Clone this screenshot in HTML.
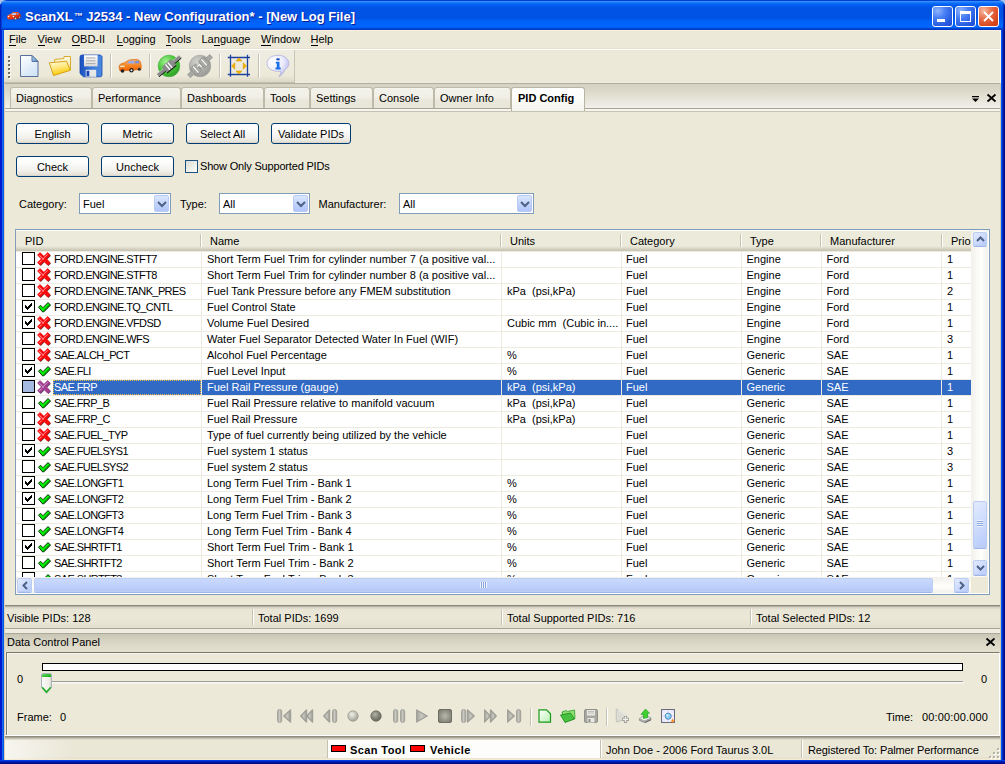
<!DOCTYPE html>
<html><head><meta charset="utf-8">
<style>
*{margin:0;padding:0;box-sizing:border-box}
html,body{width:1005px;height:764px;overflow:hidden;background:#a8c2ea}
body{position:relative;font-family:"Liberation Sans",sans-serif;font-size:11px;color:#000}
.a{position:absolute}
.t{position:absolute;white-space:nowrap;line-height:16px;height:16px}
#win{position:absolute;left:0;top:0;width:1005px;height:764px;border-radius:7px 7px 0 0;overflow:hidden;
 background:linear-gradient(to right,#0019cf 0,#0019cf 2px,#166aee 2px,#166aee 3px,#0055e5 3px,#0055e5 4px,transparent 4px,transparent 1001px,#0050f4 1001px,#0050f4 1002px,#0030d0 1002px,#0030d0 1003px,#001a9c 1003px,#001a9c 1004px,#000e88 1004px)}
#title{position:absolute;left:0;top:0;width:1005px;height:30px;
 background:linear-gradient(to bottom,#0041d0 0,#0041d0 1px,#3d95ff 1px,#2a86ff 2px,#0c6ff8 3px,#005ef0 5px,#0053e4 8px,#0052e2 18px,#0062f8 21px,#0066ff 27px,#0056ea 28px,#0038c4 29px,#0038c4 30px)}
#client{position:absolute;left:4px;top:30px;width:997px;height:730px;background:#ece9d8;overflow:hidden}
#bottomb{position:absolute;left:0;top:760px;width:1005px;height:4px;background:linear-gradient(to bottom,#0040e8 0,#0040e8 1px,#0020b8 1px,#0020b8 2px,#0012a0 2px,#0012a0 3px,#000a88 3px)}
.ttl{position:absolute;left:25px;top:9px;color:#fff;font-weight:bold;font-size:13px;line-height:16px;text-shadow:1px 1px 0 #0a1e9a}
.wbtn{position:absolute;top:6px;width:21px;height:21px;border:1px solid #fff;border-radius:3px;
 background:radial-gradient(circle at 25% 20%,#8fb4fb 0,#4a80f4 35%,#2459e0 75%,#1c4ad0 100%)}
.wbtn.c{background:radial-gradient(circle at 25% 20%,#f4b8a0 0,#e86a44 40%,#d9481f 75%,#c23c18 100%)}
u{text-decoration:none;border-bottom:1px solid #000;}
.btn{position:absolute;height:21px;border:1px solid #003c74;border-radius:3px;
 background:linear-gradient(to bottom,#fff 0,#fcfcfb 30%,#f2f1ec 70%,#e6e3d8 92%,#d6d0c5 100%);text-align:center;line-height:20px}
.combo{position:absolute;height:21px;border:1px solid #7f9db9;background:#fff}
.combo .tx{position:absolute;left:3px;top:2px;line-height:16px}
.cbtn{position:absolute;right:1px;top:1px;width:15px;height:17px;border:1px solid #b9cbf3;border-radius:2px;
 background:linear-gradient(to bottom,#dbe6fd 0,#c4d5fc 50%,#b0c6fa 100%)}
.hd{position:absolute;top:0;height:21px;line-height:16px;padding-top:4px}
.sep{position:absolute;top:4px;width:2px;height:13px;border-left:1px solid #c7c5b2;border-right:1px solid #fff}
.row{position:absolute;left:0;width:956px;height:16px}
.cell{position:absolute;top:0;line-height:15px;height:16px;white-space:nowrap;overflow:hidden}
.cb{position:absolute;left:6px;top:1px;width:13px;height:13px;border:1px solid #000;background:#fff}
.tab{position:absolute;top:57px;height:21px;border:1px solid #bdbaa9;border-bottom:none;border-radius:3px 3px 0 0;
 background:linear-gradient(to bottom,#f8f7f2 0,#f3f2ea 1px,#f1efe5 10px,#eae8dc 11px,#e8e6d8 100%)}
.tab .tx{position:absolute;top:2px;line-height:16px;white-space:nowrap}
</style></head><body>
<div id="win">
<div id="title">
 <svg class="a" style="left:4px;top:8px" width="20" height="14" viewBox="4 8 20 14">
  <defs><linearGradient id="gtc" x1="0" y1="0" x2="1" y2="1"><stop offset="0" stop-color="#ff8050"/><stop offset="0.5" stop-color="#f03a10"/><stop offset="1" stop-color="#b81400"/></linearGradient></defs>
  <path d="M7 17 Q7 15.2 9 14.6 L11.5 13.5 L12.5 12.3 Q15 11.6 18 12.1 L20 13.8 Q21.2 15 20.9 16.8 L19.5 18.3 L16 19.3 L9 19.6 Q7 19.2 7 17 Z" fill="url(#gtc)"/>
  <path d="M11 14.9 L12.8 13 H16.2 L16 14.9 Z" fill="#b0c8f4"/>
  <path d="M16.9 13.1 H18.1 L18.8 14.8 H16.7 Z" fill="#8898d0"/>
  <circle cx="8.6" cy="16.5" r="0.7" fill="#fff"/><circle cx="13.4" cy="16.5" r="0.7" fill="#fff"/>
  <ellipse cx="15.4" cy="18.6" rx="1" ry="1.3" fill="#eee" stroke="#222" stroke-width="0.6"/>
  <ellipse cx="19.6" cy="17.3" rx="0.8" ry="1.1" fill="#eee" stroke="#222" stroke-width="0.6"/>
 </svg>
 <div class="a" style="left:0;top:4px;width:2px;height:26px;background:linear-gradient(to right,#0020b8 0,#0020b8 1px,#0040d8 1px)"></div>
 <div class="a" style="left:1003px;top:4px;width:2px;height:26px;background:linear-gradient(to right,#0030c0 0,#0030c0 1px,#0018a0 1px)"></div>
 <div class="ttl">ScanXL<span style="font-size:9px;position:relative;top:-2px;margin-left:1px">™</span> J2534 - New Configuration* - [New Log File]</div>
 <div class="wbtn" style="left:932px"><div class="a" style="left:4px;top:12px;width:8px;height:3px;background:#fff"></div></div>
 <div class="wbtn" style="left:955px"><div class="a" style="left:4px;top:4px;width:11px;height:11px;border:1px solid #fff;border-top-width:3px"></div></div>
 <div class="wbtn c" style="left:978px">
  <svg class="a" style="left:3px;top:3px" width="13" height="13" viewBox="0 0 13 13"><path d="M2 2 L11 11 M11 2 L2 11" stroke="#fff" stroke-width="1.9"/></svg>
 </div>
</div>
<div id="client">
<div class="t" style="left:5.0px;top:1px"><u>F</u>ile</div>
<div class="t" style="left:33.5px;top:1px"><u>V</u>iew</div>
<div class="t" style="left:67.5px;top:1px"><u>O</u>BD-II</div>
<div class="t" style="left:112.5px;top:1px"><u>L</u>ogging</div>
<div class="t" style="left:161.5px;top:1px"><u>T</u>ools</div>
<div class="t" style="left:197.5px;top:1px">La<u>n</u>guage</div>
<div class="t" style="left:257.0px;top:1px"><u>W</u>indow</div>
<div class="t" style="left:306.5px;top:1px"><u>H</u>elp</div>
<div class="a" style="left:0;top:18px;width:997px;height:1px;background:#e6e2d0"></div>
<div class="a" style="left:0;top:19px;width:997px;height:1px;background:#fff"></div>
<div class="a" style="left:0;top:20px;width:997px;height:32px;background:#ece9d8"></div>
<div class="a" style="left:0;top:52px;width:997px;height:1px;background:#eeebdd"></div>
<div class="a" style="left:0;top:20px;width:291px;height:33px;background:linear-gradient(to bottom,#efede2,#ece9d8 80%,#dcd9c8);border-right:1px solid #c8c5b4;border-bottom:1px solid #c3bfae"></div>
<div class="a" style="left:4px;top:26px;width:2px;height:2px;background:#6e6c62;box-shadow:1px 1px 0 #fff"></div>
<div class="a" style="left:4px;top:30px;width:2px;height:2px;background:#6e6c62;box-shadow:1px 1px 0 #fff"></div>
<div class="a" style="left:4px;top:34px;width:2px;height:2px;background:#6e6c62;box-shadow:1px 1px 0 #fff"></div>
<div class="a" style="left:4px;top:38px;width:2px;height:2px;background:#6e6c62;box-shadow:1px 1px 0 #fff"></div>
<div class="a" style="left:4px;top:42px;width:2px;height:2px;background:#6e6c62;box-shadow:1px 1px 0 #fff"></div>
<div class="a" style="left:4px;top:46px;width:2px;height:2px;background:#6e6c62;box-shadow:1px 1px 0 #fff"></div>
<div class="a" style="left:106px;top:24px;width:1px;height:24px;background:#c5c2b2;box-shadow:1px 0 0 #fff"></div>
<div class="a" style="left:145px;top:24px;width:1px;height:24px;background:#c5c2b2;box-shadow:1px 0 0 #fff"></div>
<div class="a" style="left:215px;top:24px;width:1px;height:24px;background:#c5c2b2;box-shadow:1px 0 0 #fff"></div>
<div class="a" style="left:254px;top:24px;width:1px;height:24px;background:#c5c2b2;box-shadow:1px 0 0 #fff"></div>
<svg class="a" style="left:13px;top:22px" width="26" height="28" viewBox="17 52 26 28"><defs><linearGradient id="gn" x1="0" y1="0" x2="0.6" y2="1"><stop offset="0" stop-color="#fff"/><stop offset="1" stop-color="#d2e4f6"/></linearGradient>
<linearGradient id="gnf" x1="0" y1="0" x2="1" y2="1"><stop offset="0" stop-color="#c8e4f8"/><stop offset="1" stop-color="#3a88d0"/></linearGradient></defs>
<path d="M20.5 55.5 H32 L38 61.5 V76.5 H20.5 Z" fill="url(#gn)" stroke="#5b6f9c" stroke-width="1"/>
<path d="M32 55.5 V61.5 H38 Z" fill="url(#gnf)" stroke="#5b6f9c" stroke-width="1" stroke-linejoin="round"/></svg>
<svg class="a" style="left:43px;top:22px" width="26" height="28" viewBox="47 52 26 28"><defs><linearGradient id="go" x1="0" y1="0" x2="0.3" y2="1"><stop offset="0" stop-color="#fffce0"/><stop offset="0.5" stop-color="#ffe880"/><stop offset="1" stop-color="#f8c800"/></linearGradient>
<linearGradient id="gob" x1="0" y1="0" x2="0" y2="1"><stop offset="0" stop-color="#fffbe0"/><stop offset="1" stop-color="#f4e090"/></linearGradient></defs>
<path d="M54.6 59.5 L63.8 58.5 L64 56.5 H70.5 V69.5 L54.6 70.5 Z" fill="url(#gob)" stroke="#d4a420" stroke-width="0.9"/>
<path d="M49.3 62.8 L66.5 61.2 L70.4 70.3 L53.5 75.6 Z" fill="url(#go)" stroke="#d09a10" stroke-width="0.9" stroke-linejoin="round"/></svg>
<svg class="a" style="left:74px;top:22px" width="26" height="28" viewBox="78 52 26 28"><defs><linearGradient id="gf" x1="0" y1="0" x2="1" y2="0"><stop offset="0" stop-color="#1a50c0"/><stop offset="0.5" stop-color="#3a78d8"/><stop offset="1" stop-color="#4a8ae0"/></linearGradient>
<linearGradient id="gfl" x1="0" y1="0" x2="0" y2="1"><stop offset="0" stop-color="#ffffff"/><stop offset="1" stop-color="#d8d8d8"/></linearGradient></defs>
<path d="M82 55 H100.5 L102 56.5 V75 Q102 76.8 100.3 76.8 H83.5 L80 73.5 V57 Q80 55 82 55 Z" fill="url(#gf)" stroke="#1848b0" stroke-width="0.8"/>
<rect x="84" y="55.2" width="13.6" height="11.2" fill="url(#gfl)"/>
<path d="M86 58 H95.5 M86 60.8 H95.5 M86 63.6 H95.5" stroke="#a8a8a8" stroke-width="1"/>
<rect x="85.7" y="69.8" width="10.5" height="7" fill="#e8e8e8"/>
<rect x="86.5" y="70.8" width="2.8" height="5.5" fill="#1a48b8"/></svg>
<svg class="a" style="left:113px;top:27px" width="26" height="17" viewBox="117 57 26 17"><defs><linearGradient id="gc" x1="0" y1="0" x2="0" y2="1"><stop offset="0" stop-color="#ffb050"/><stop offset="1" stop-color="#f06000"/></linearGradient></defs>
<path d="M119 67 L119.5 65 Q120.5 63.5 124 63 L128.5 60.2 Q131 59.3 137 59.5 Q139.5 59.8 140.5 62 L141.3 66 L141 69.5 L120 71 Z" fill="url(#gc)" stroke="#d85a00" stroke-width="0.6"/>
<path d="M126.5 63.5 L129.5 60.8 H134.5 L134.3 63.5 Z" fill="#98aaf0"/>
<path d="M135.3 60.7 H138.5 L139.8 63.3 L135.2 63.6 Z" fill="#7890e0"/>
<rect x="119.8" y="65.5" width="5" height="1.6" fill="#ffe8c0" stroke="#b88850" stroke-width="0.3"/>
<circle cx="122.5" cy="71" r="1.8" fill="#222"/><circle cx="131.5" cy="70.3" r="2.2" fill="#222"/><circle cx="131.5" cy="70.3" r="1" fill="#eee"/><circle cx="139.3" cy="69.3" r="1.5" fill="#333"/></svg>
<svg class="a" style="left:152px;top:23px" width="26" height="26" viewBox="156 53 26 26"><defs><radialGradient id="gg" cx="0.35" cy="0.3" r="0.75"><stop offset="0" stop-color="#a0f090"/><stop offset="0.55" stop-color="#48c838"/><stop offset="1" stop-color="#30a028"/></radialGradient></defs>
<circle cx="169" cy="66" r="10.8" fill="url(#gg)" stroke="#40a838" stroke-width="0.6"/>
<g transform="rotate(-40 169 66)">
<rect x="154.5" y="64.2" width="29" height="3.6" fill="#8c8c8c"/>
<path d="M154.5 67.9 H183.5" stroke="#111" stroke-width="0.9"/>
<path d="M154.5 64.3 H183.5" stroke="#d0d0d0" stroke-width="0.6"/>
<rect x="163" y="62" width="12" height="8" rx="0.8" fill="#8a8a8a"/>
<path d="M163 70.2 H175" stroke="#111" stroke-width="1"/>
<path d="M167.3 62.5 V69.5 M170.3 62.5 V69.5" stroke="#fff" stroke-width="1.3"/>
</g></svg>
<svg class="a" style="left:183px;top:23px" width="26" height="26" viewBox="187 53 26 26"><defs><radialGradient id="gy" cx="0.35" cy="0.3" r="0.75"><stop offset="0" stop-color="#d0d0cc"/><stop offset="0.55" stop-color="#b0b0ac"/><stop offset="1" stop-color="#989894"/></radialGradient></defs>
<circle cx="200" cy="66" r="10.8" fill="url(#gy)" stroke="#a0a09c" stroke-width="0.6"/>
<g transform="rotate(-42 200 66)">
<rect x="185" y="64" width="30" height="4.2" fill="#a8a8a4" stroke="#888" stroke-width="0.5"/>
<rect x="191" y="61.5" width="7" height="9" rx="1" fill="#a8a8a4" stroke="#888" stroke-width="0.6"/>
<rect x="202" y="61.5" width="7" height="9" rx="1" fill="#a8a8a4" stroke="#888" stroke-width="0.6"/>
<path d="M194.5 62 V70 M205.5 62 V70 M197.5 64.5 H200.5 V68" stroke="#fff" stroke-width="1.1" fill="none"/>
</g></svg>
<svg class="a" style="left:222px;top:23px" width="26" height="26" viewBox="226 53 26 26"><path d="M227.8 57.5 H250 M227.8 74.5 H250 M230.5 54.8 V76.8 M247.5 54.8 V76.8" stroke="#1c40a0" stroke-width="1.3"/>
<path d="M236 61 L239 57.8 L242 61 Z M236 71 L239 74.2 L242 71 Z M234.8 62.8 L231.5 66 L234.8 69.2 Z M243.2 62.8 L246.5 66 L243.2 69.2 Z" fill="#f4b400" stroke="#d09000" stroke-width="0.5" stroke-linejoin="round"/></svg>
<svg class="a" style="left:261px;top:23px" width="26" height="26" viewBox="265 53 26 26"><defs><radialGradient id="gi" cx="0.3" cy="0.3" r="0.8"><stop offset="0" stop-color="#fff"/><stop offset="0.55" stop-color="#ececfc"/><stop offset="1" stop-color="#b8b8f0"/></radialGradient></defs>
<path d="M278 55.3 C284.5 55.3 288.8 58.8 288.8 63.3 C288.8 66.5 287 68.5 284.5 70 C284 72.5 282 75 279 76.5 C280.5 74.5 281 72.5 280.5 71.3 C272 72 267 68 267 63.3 C267 58.8 271.5 55.3 278 55.3 Z" fill="url(#gi)" stroke="#a8a8d8" stroke-width="0.7"/>
<ellipse cx="278" cy="59.3" rx="1.9" ry="1.1" fill="#1848b8"/>
<path d="M275.8 61.8 H279.5 V67.6 H280.7 V69.5 H275.5 V67.6 H276.8 V63.5 H275.8 Z" fill="#1a70e8"/></svg>
<div class="a" style="left:0;top:53px;width:997px;height:25px;background:linear-gradient(to bottom,#b0aea0 0,#b0aea0 1px,#d5d2c4 1px,#d9d6c7 6px,#e5e3d7 15px,#f1f0ea 25px)"></div>
<div class="a" style="left:0;top:78px;width:997px;height:1px;background:#a8a596"></div>
<div class="a" style="left:0;top:79px;width:997px;height:2px;background:#f6f5ef"></div>
<div class="a" style="left:0;top:81px;width:997px;height:1px;background:#c5c2b2"></div>
<div class="tab" style="left:6px;width:82px"><div class="tx" style="left:5px">Diagnostics</div></div>
<div class="tab" style="left:88px;width:89px"><div class="tx" style="left:5px">Performance</div></div>
<div class="tab" style="left:177px;width:83px"><div class="tx" style="left:5px">Dashboards</div></div>
<div class="tab" style="left:260px;width:46px"><div class="tx" style="left:5px">Tools</div></div>
<div class="tab" style="left:306px;width:63px"><div class="tx" style="left:5px">Settings</div></div>
<div class="tab" style="left:369px;width:61px"><div class="tx" style="left:5px">Console</div></div>
<div class="tab" style="left:430px;width:77px"><div class="tx" style="left:5px">Owner Info</div></div>
<div class="tab" style="left:507px;top:57px;width:74px;height:24px;background:linear-gradient(to bottom,#fff 0,#fdfdfb 10px,#f4f3ec 100%);border-color:#b8b5a4"><div class="tx" style="left:6px;top:2px;font-weight:bold">PID Config</div></div>
<svg class="a" style="left:968px;top:66px" width="9" height="7" viewBox="0 0 9 7"><path d="M0 0 H7 V1.3 H0 Z M0 2.5 H7 L3.5 6 Z" fill="#000"/></svg>
<svg class="a" style="left:982px;top:63px" width="11" height="10" viewBox="0 0 11 10"><path d="M1.5 1.5 L9.5 8.5 M9.5 1.5 L1.5 8.5" stroke="#000" stroke-width="1.8"/></svg>
<div class="btn" style="left:12px;top:93px;width:73px">English</div>
<div class="btn" style="left:97px;top:93px;width:73px">Metric</div>
<div class="btn" style="left:182px;top:93px;width:73px">Select All</div>
<div class="btn" style="left:267px;top:93px;width:80px">Validate PIDs</div>
<div class="btn" style="left:12px;top:126px;width:73px">Check</div>
<div class="btn" style="left:97px;top:126px;width:73px">Uncheck</div>
<div class="a" style="left:181px;top:130px;width:13px;height:13px;border:1px solid #1c5180;background:linear-gradient(135deg,#dcdcd7 0,#f0f0ea 60%,#fff 100%)"></div>
<div class="t" style="left:196px;top:128px;letter-spacing:-0.18px">Show Only Supported PIDs</div>
<div class="t" style="left:15px;top:166px">Category:</div>
<div class="combo" style="left:75px;top:163px;width:92px"><div class="tx">Fuel</div><div class="cbtn"><svg class="a" style="left:2px;top:5px" width="10" height="7" viewBox="0 0 10 7"><path d="M1 1 L5 5 L9 1" fill="none" stroke="#4d6185" stroke-width="2"/></svg></div></div>
<div class="t" style="left:176px;top:166px">Type:</div>
<div class="combo" style="left:215px;top:163px;width:91px"><div class="tx">All</div><div class="cbtn"><svg class="a" style="left:2px;top:5px" width="10" height="7" viewBox="0 0 10 7"><path d="M1 1 L5 5 L9 1" fill="none" stroke="#4d6185" stroke-width="2"/></svg></div></div>
<div class="t" style="left:314.5px;top:166px">Manufacturer:</div>
<div class="combo" style="left:395px;top:163px;width:135px"><div class="tx">All</div><div class="cbtn"><svg class="a" style="left:2px;top:5px" width="10" height="7" viewBox="0 0 10 7"><path d="M1 1 L5 5 L9 1" fill="none" stroke="#4d6185" stroke-width="2"/></svg></div></div>
<div class="a" style="left:11px;top:199px;width:975px;height:366px;border:1px solid #7f9db9;background:#fff;overflow:hidden">
<div class="a" style="left:0;top:1px;width:955px;height:20px;background:linear-gradient(to bottom,#ebeadb 0,#ebeadb 15px,#e5e2d2 16px,#dedacb 17px,#d6d2c2 18px,#cbc7b7 19px,#cbc7b7 20px)"></div>
<div class="t" style="left:9px;top:3px">PID</div>
<div class="t" style="left:194px;top:3px">Name</div>
<div class="a" style="left:184px;top:4px;width:1px;height:13px;background:#c7c5b2;box-shadow:1px 0 0 #fff"></div>
<div class="t" style="left:494px;top:3px">Units</div>
<div class="a" style="left:484px;top:4px;width:1px;height:13px;background:#c7c5b2;box-shadow:1px 0 0 #fff"></div>
<div class="t" style="left:614px;top:3px">Category</div>
<div class="a" style="left:604px;top:4px;width:1px;height:13px;background:#c7c5b2;box-shadow:1px 0 0 #fff"></div>
<div class="t" style="left:734px;top:3px">Type</div>
<div class="a" style="left:724px;top:4px;width:1px;height:13px;background:#c7c5b2;box-shadow:1px 0 0 #fff"></div>
<div class="t" style="left:814px;top:3px">Manufacturer</div>
<div class="a" style="left:804px;top:4px;width:1px;height:13px;background:#c7c5b2;box-shadow:1px 0 0 #fff"></div>
<div class="t" style="left:935px;top:3px">Prior</div>
<div class="a" style="left:925px;top:4px;width:1px;height:13px;background:#c7c5b2;box-shadow:1px 0 0 #fff"></div>
<div class="a" style="left:0;top:21px;width:955px;height:1px;background:#edebe0"></div>
<div class="a" style="left:6px;top:22px;width:13px;height:13px;border:1px solid #000;background:#fff"></div>
<svg class="a" style="left:20.5px;top:21.5px" width="15" height="15" viewBox="0 0 15 15"><path d="M0.5 3 L3 0.5 L6.8 4.3 L10.6 0.5 L13.1 3 L9.3 6.8 L13.1 10.6 L10.6 13.1 L6.8 9.3 L3 13.1 L0.5 10.6 L4.3 6.8 Z" transform="translate(0.8 0.8)" fill="#600000" opacity="0.85"/><path d="M0.5 3 L3 0.5 L6.8 4.3 L10.6 0.5 L13.1 3 L9.3 6.8 L13.1 10.6 L10.6 13.1 L6.8 9.3 L3 13.1 L0.5 10.6 L4.3 6.8 Z" fill="#ff0a0a" stroke="#ff0a0a" stroke-width="0.6"/><path d="M2.2 3 L6.8 7.6 M10.6 2.2 L5.2 7.6 M2.4 10.8 L4.6 8.6" fill="none" stroke="#ffc8d8" stroke-width="0.9" opacity="0.85"/></svg>
<div class="cell" style="left:38px;top:22px;width:146px;color:#000;letter-spacing:-0.6px;">FORD.ENGINE.STFT7</div>
<div class="cell" style="left:191px;top:22px;width:292px;color:#000;">Short Term Fuel Trim for cylinder number 7 (a positive val...</div>
<div class="cell" style="left:491px;top:22px;width:113px;color:#000;"></div>
<div class="cell" style="left:610px;top:22px;width:113px;color:#000;">Fuel</div>
<div class="cell" style="left:730.5px;top:22px;width:73px;color:#000;">Engine</div>
<div class="cell" style="left:810.5px;top:22px;width:113px;color:#000;">Ford</div>
<div class="cell" style="left:931px;top:22px;width:23px;color:#000;">1</div>
<div class="a" style="left:0;top:37px;width:955px;height:1px;background:#edebe0"></div>
<div class="a" style="left:6px;top:38px;width:13px;height:13px;border:1px solid #000;background:#fff"></div>
<svg class="a" style="left:20.5px;top:37.5px" width="15" height="15" viewBox="0 0 15 15"><path d="M0.5 3 L3 0.5 L6.8 4.3 L10.6 0.5 L13.1 3 L9.3 6.8 L13.1 10.6 L10.6 13.1 L6.8 9.3 L3 13.1 L0.5 10.6 L4.3 6.8 Z" transform="translate(0.8 0.8)" fill="#600000" opacity="0.85"/><path d="M0.5 3 L3 0.5 L6.8 4.3 L10.6 0.5 L13.1 3 L9.3 6.8 L13.1 10.6 L10.6 13.1 L6.8 9.3 L3 13.1 L0.5 10.6 L4.3 6.8 Z" fill="#ff0a0a" stroke="#ff0a0a" stroke-width="0.6"/><path d="M2.2 3 L6.8 7.6 M10.6 2.2 L5.2 7.6 M2.4 10.8 L4.6 8.6" fill="none" stroke="#ffc8d8" stroke-width="0.9" opacity="0.85"/></svg>
<div class="cell" style="left:38px;top:38px;width:146px;color:#000;letter-spacing:-0.6px;">FORD.ENGINE.STFT8</div>
<div class="cell" style="left:191px;top:38px;width:292px;color:#000;">Short Term Fuel Trim for cylinder number 8 (a positive val...</div>
<div class="cell" style="left:491px;top:38px;width:113px;color:#000;"></div>
<div class="cell" style="left:610px;top:38px;width:113px;color:#000;">Fuel</div>
<div class="cell" style="left:730.5px;top:38px;width:73px;color:#000;">Engine</div>
<div class="cell" style="left:810.5px;top:38px;width:113px;color:#000;">Ford</div>
<div class="cell" style="left:931px;top:38px;width:23px;color:#000;">1</div>
<div class="a" style="left:0;top:53px;width:955px;height:1px;background:#edebe0"></div>
<div class="a" style="left:6px;top:54px;width:13px;height:13px;border:1px solid #000;background:#fff"></div>
<svg class="a" style="left:20.5px;top:53.5px" width="15" height="15" viewBox="0 0 15 15"><path d="M0.5 3 L3 0.5 L6.8 4.3 L10.6 0.5 L13.1 3 L9.3 6.8 L13.1 10.6 L10.6 13.1 L6.8 9.3 L3 13.1 L0.5 10.6 L4.3 6.8 Z" transform="translate(0.8 0.8)" fill="#600000" opacity="0.85"/><path d="M0.5 3 L3 0.5 L6.8 4.3 L10.6 0.5 L13.1 3 L9.3 6.8 L13.1 10.6 L10.6 13.1 L6.8 9.3 L3 13.1 L0.5 10.6 L4.3 6.8 Z" fill="#ff0a0a" stroke="#ff0a0a" stroke-width="0.6"/><path d="M2.2 3 L6.8 7.6 M10.6 2.2 L5.2 7.6 M2.4 10.8 L4.6 8.6" fill="none" stroke="#ffc8d8" stroke-width="0.9" opacity="0.85"/></svg>
<div class="cell" style="left:38px;top:54px;width:146px;color:#000;letter-spacing:-0.6px;">FORD.ENGINE.TANK_PRES</div>
<div class="cell" style="left:191px;top:54px;width:292px;color:#000;">Fuel Tank Pressure before any FMEM substitution</div>
<div class="cell" style="left:491px;top:54px;width:113px;color:#000;">kPa&nbsp; (psi,kPa)</div>
<div class="cell" style="left:610px;top:54px;width:113px;color:#000;">Fuel</div>
<div class="cell" style="left:730.5px;top:54px;width:73px;color:#000;">Engine</div>
<div class="cell" style="left:810.5px;top:54px;width:113px;color:#000;">Ford</div>
<div class="cell" style="left:931px;top:54px;width:23px;color:#000;">2</div>
<div class="a" style="left:0;top:69px;width:955px;height:1px;background:#edebe0"></div>
<div class="a" style="left:6px;top:70px;width:13px;height:13px;border:1px solid #000;background:#fff"><svg class="a" style="left:0;top:0" width="11" height="11" viewBox="0 0 11 11" shape-rendering="crispEdges"><path d="M8 2h1v1h-1z M7 3h2v1h-2z M2 4h1v1h-1z M6 4h3v1h-3z M2 5h2v1h-2z M5 5h3v1h-3z M2 6h5v1h-5z M3 7h3v1h-3z M4 8h1v1h-1z" fill="#000"/></svg></div>
<svg class="a" style="left:21px;top:71px" width="15" height="12" viewBox="0 0 15 12"><path d="M1.5 6.2 L3.5 4.2 L6 6.7 L11 1.5 L13.6 4.1 L6.8 10.9 L5.6 10.9 Z" fill="#00f000" stroke="#000" stroke-width="0.8" stroke-linejoin="round"/><path d="M6.8 9.8 L12.8 3.8" stroke="#0a7a0a" stroke-width="1.1"/></svg>
<div class="cell" style="left:38px;top:70px;width:146px;color:#000;letter-spacing:-0.6px;">FORD.ENGINE.TQ_CNTL</div>
<div class="cell" style="left:191px;top:70px;width:292px;color:#000;">Fuel Control State</div>
<div class="cell" style="left:491px;top:70px;width:113px;color:#000;"></div>
<div class="cell" style="left:610px;top:70px;width:113px;color:#000;">Fuel</div>
<div class="cell" style="left:730.5px;top:70px;width:73px;color:#000;">Engine</div>
<div class="cell" style="left:810.5px;top:70px;width:113px;color:#000;">Ford</div>
<div class="cell" style="left:931px;top:70px;width:23px;color:#000;">1</div>
<div class="a" style="left:0;top:85px;width:955px;height:1px;background:#edebe0"></div>
<div class="a" style="left:6px;top:86px;width:13px;height:13px;border:1px solid #000;background:#fff"><svg class="a" style="left:0;top:0" width="11" height="11" viewBox="0 0 11 11" shape-rendering="crispEdges"><path d="M8 2h1v1h-1z M7 3h2v1h-2z M2 4h1v1h-1z M6 4h3v1h-3z M2 5h2v1h-2z M5 5h3v1h-3z M2 6h5v1h-5z M3 7h3v1h-3z M4 8h1v1h-1z" fill="#000"/></svg></div>
<svg class="a" style="left:20.5px;top:85.5px" width="15" height="15" viewBox="0 0 15 15"><path d="M0.5 3 L3 0.5 L6.8 4.3 L10.6 0.5 L13.1 3 L9.3 6.8 L13.1 10.6 L10.6 13.1 L6.8 9.3 L3 13.1 L0.5 10.6 L4.3 6.8 Z" transform="translate(0.8 0.8)" fill="#600000" opacity="0.85"/><path d="M0.5 3 L3 0.5 L6.8 4.3 L10.6 0.5 L13.1 3 L9.3 6.8 L13.1 10.6 L10.6 13.1 L6.8 9.3 L3 13.1 L0.5 10.6 L4.3 6.8 Z" fill="#ff0a0a" stroke="#ff0a0a" stroke-width="0.6"/><path d="M2.2 3 L6.8 7.6 M10.6 2.2 L5.2 7.6 M2.4 10.8 L4.6 8.6" fill="none" stroke="#ffc8d8" stroke-width="0.9" opacity="0.85"/></svg>
<div class="cell" style="left:38px;top:86px;width:146px;color:#000;letter-spacing:-0.6px;">FORD.ENGINE.VFDSD</div>
<div class="cell" style="left:191px;top:86px;width:292px;color:#000;">Volume Fuel Desired</div>
<div class="cell" style="left:491px;top:86px;width:113px;color:#000;">Cubic mm&nbsp; (Cubic in....</div>
<div class="cell" style="left:610px;top:86px;width:113px;color:#000;">Fuel</div>
<div class="cell" style="left:730.5px;top:86px;width:73px;color:#000;">Engine</div>
<div class="cell" style="left:810.5px;top:86px;width:113px;color:#000;">Ford</div>
<div class="cell" style="left:931px;top:86px;width:23px;color:#000;">1</div>
<div class="a" style="left:0;top:101px;width:955px;height:1px;background:#edebe0"></div>
<div class="a" style="left:6px;top:102px;width:13px;height:13px;border:1px solid #000;background:#fff"></div>
<svg class="a" style="left:20.5px;top:101.5px" width="15" height="15" viewBox="0 0 15 15"><path d="M0.5 3 L3 0.5 L6.8 4.3 L10.6 0.5 L13.1 3 L9.3 6.8 L13.1 10.6 L10.6 13.1 L6.8 9.3 L3 13.1 L0.5 10.6 L4.3 6.8 Z" transform="translate(0.8 0.8)" fill="#600000" opacity="0.85"/><path d="M0.5 3 L3 0.5 L6.8 4.3 L10.6 0.5 L13.1 3 L9.3 6.8 L13.1 10.6 L10.6 13.1 L6.8 9.3 L3 13.1 L0.5 10.6 L4.3 6.8 Z" fill="#ff0a0a" stroke="#ff0a0a" stroke-width="0.6"/><path d="M2.2 3 L6.8 7.6 M10.6 2.2 L5.2 7.6 M2.4 10.8 L4.6 8.6" fill="none" stroke="#ffc8d8" stroke-width="0.9" opacity="0.85"/></svg>
<div class="cell" style="left:38px;top:102px;width:146px;color:#000;letter-spacing:-0.6px;">FORD.ENGINE.WFS</div>
<div class="cell" style="left:191px;top:102px;width:292px;color:#000;">Water Fuel Separator Detected Water In Fuel (WIF)</div>
<div class="cell" style="left:491px;top:102px;width:113px;color:#000;"></div>
<div class="cell" style="left:610px;top:102px;width:113px;color:#000;">Fuel</div>
<div class="cell" style="left:730.5px;top:102px;width:73px;color:#000;">Engine</div>
<div class="cell" style="left:810.5px;top:102px;width:113px;color:#000;">Ford</div>
<div class="cell" style="left:931px;top:102px;width:23px;color:#000;">3</div>
<div class="a" style="left:0;top:117px;width:955px;height:1px;background:#edebe0"></div>
<div class="a" style="left:6px;top:118px;width:13px;height:13px;border:1px solid #000;background:#fff"></div>
<svg class="a" style="left:20.5px;top:117.5px" width="15" height="15" viewBox="0 0 15 15"><path d="M0.5 3 L3 0.5 L6.8 4.3 L10.6 0.5 L13.1 3 L9.3 6.8 L13.1 10.6 L10.6 13.1 L6.8 9.3 L3 13.1 L0.5 10.6 L4.3 6.8 Z" transform="translate(0.8 0.8)" fill="#600000" opacity="0.85"/><path d="M0.5 3 L3 0.5 L6.8 4.3 L10.6 0.5 L13.1 3 L9.3 6.8 L13.1 10.6 L10.6 13.1 L6.8 9.3 L3 13.1 L0.5 10.6 L4.3 6.8 Z" fill="#ff0a0a" stroke="#ff0a0a" stroke-width="0.6"/><path d="M2.2 3 L6.8 7.6 M10.6 2.2 L5.2 7.6 M2.4 10.8 L4.6 8.6" fill="none" stroke="#ffc8d8" stroke-width="0.9" opacity="0.85"/></svg>
<div class="cell" style="left:38px;top:118px;width:146px;color:#000;letter-spacing:-0.6px;">SAE.ALCH_PCT</div>
<div class="cell" style="left:191px;top:118px;width:292px;color:#000;">Alcohol Fuel Percentage</div>
<div class="cell" style="left:491px;top:118px;width:113px;color:#000;">%</div>
<div class="cell" style="left:610px;top:118px;width:113px;color:#000;">Fuel</div>
<div class="cell" style="left:730.5px;top:118px;width:73px;color:#000;">Generic</div>
<div class="cell" style="left:810.5px;top:118px;width:113px;color:#000;">SAE</div>
<div class="cell" style="left:931px;top:118px;width:23px;color:#000;">1</div>
<div class="a" style="left:0;top:133px;width:955px;height:1px;background:#edebe0"></div>
<div class="a" style="left:6px;top:134px;width:13px;height:13px;border:1px solid #000;background:#fff"><svg class="a" style="left:0;top:0" width="11" height="11" viewBox="0 0 11 11" shape-rendering="crispEdges"><path d="M8 2h1v1h-1z M7 3h2v1h-2z M2 4h1v1h-1z M6 4h3v1h-3z M2 5h2v1h-2z M5 5h3v1h-3z M2 6h5v1h-5z M3 7h3v1h-3z M4 8h1v1h-1z" fill="#000"/></svg></div>
<svg class="a" style="left:21px;top:135px" width="15" height="12" viewBox="0 0 15 12"><path d="M1.5 6.2 L3.5 4.2 L6 6.7 L11 1.5 L13.6 4.1 L6.8 10.9 L5.6 10.9 Z" fill="#00f000" stroke="#000" stroke-width="0.8" stroke-linejoin="round"/><path d="M6.8 9.8 L12.8 3.8" stroke="#0a7a0a" stroke-width="1.1"/></svg>
<div class="cell" style="left:38px;top:134px;width:146px;color:#000;letter-spacing:-0.6px;">SAE.FLI</div>
<div class="cell" style="left:191px;top:134px;width:292px;color:#000;">Fuel Level Input</div>
<div class="cell" style="left:491px;top:134px;width:113px;color:#000;">%</div>
<div class="cell" style="left:610px;top:134px;width:113px;color:#000;">Fuel</div>
<div class="cell" style="left:730.5px;top:134px;width:73px;color:#000;">Generic</div>
<div class="cell" style="left:810.5px;top:134px;width:113px;color:#000;">SAE</div>
<div class="cell" style="left:931px;top:134px;width:23px;color:#000;">1</div>
<div class="a" style="left:0;top:149px;width:955px;height:1px;background:#edebe0"></div>
<div class="a" style="left:37px;top:150px;width:918px;height:15px;background:#316ac5"></div>
<div class="a" style="left:37px;top:150px;width:148px;height:15px;border:1px dotted #f0c040"></div>
<div class="a" style="left:6px;top:150px;width:13px;height:13px;border:1px solid #000;background:#a6b9e0"></div>
<svg class="a" style="left:20.5px;top:149.5px" width="15" height="15" viewBox="0 0 15 15"><path d="M0.5 3 L3 0.5 L6.8 4.3 L10.6 0.5 L13.1 3 L9.3 6.8 L13.1 10.6 L10.6 13.1 L6.8 9.3 L3 13.1 L0.5 10.6 L4.3 6.8 Z" transform="translate(0.8 0.8)" fill="#40205a" opacity="0.85"/><path d="M0.5 3 L3 0.5 L6.8 4.3 L10.6 0.5 L13.1 3 L9.3 6.8 L13.1 10.6 L10.6 13.1 L6.8 9.3 L3 13.1 L0.5 10.6 L4.3 6.8 Z" fill="#a4408e" stroke="#a4408e" stroke-width="0.6"/><path d="M2.2 3 L6.8 7.6 M10.6 2.2 L5.2 7.6 M2.4 10.8 L4.6 8.6" fill="none" stroke="#d8b8e8" stroke-width="0.9" opacity="0.85"/></svg>
<div class="cell" style="left:38px;top:150px;width:146px;color:#fff;letter-spacing:-0.6px;">SAE.FRP</div>
<div class="cell" style="left:191px;top:150px;width:292px;color:#fff;">Fuel Rail Pressure (gauge)</div>
<div class="cell" style="left:491px;top:150px;width:113px;color:#fff;">kPa&nbsp; (psi,kPa)</div>
<div class="cell" style="left:610px;top:150px;width:113px;color:#fff;">Fuel</div>
<div class="cell" style="left:730.5px;top:150px;width:73px;color:#fff;">Generic</div>
<div class="cell" style="left:810.5px;top:150px;width:113px;color:#fff;">SAE</div>
<div class="cell" style="left:931px;top:150px;width:23px;color:#fff;">1</div>
<div class="a" style="left:0;top:165px;width:955px;height:1px;background:#edebe0"></div>
<div class="a" style="left:6px;top:166px;width:13px;height:13px;border:1px solid #000;background:#fff"></div>
<svg class="a" style="left:21px;top:167px" width="15" height="12" viewBox="0 0 15 12"><path d="M1.5 6.2 L3.5 4.2 L6 6.7 L11 1.5 L13.6 4.1 L6.8 10.9 L5.6 10.9 Z" fill="#00f000" stroke="#000" stroke-width="0.8" stroke-linejoin="round"/><path d="M6.8 9.8 L12.8 3.8" stroke="#0a7a0a" stroke-width="1.1"/></svg>
<div class="cell" style="left:38px;top:166px;width:146px;color:#000;letter-spacing:-0.6px;">SAE.FRP_B</div>
<div class="cell" style="left:191px;top:166px;width:292px;color:#000;">Fuel Rail Pressure relative to manifold vacuum</div>
<div class="cell" style="left:491px;top:166px;width:113px;color:#000;">kPa&nbsp; (psi,kPa)</div>
<div class="cell" style="left:610px;top:166px;width:113px;color:#000;">Fuel</div>
<div class="cell" style="left:730.5px;top:166px;width:73px;color:#000;">Generic</div>
<div class="cell" style="left:810.5px;top:166px;width:113px;color:#000;">SAE</div>
<div class="cell" style="left:931px;top:166px;width:23px;color:#000;">1</div>
<div class="a" style="left:0;top:181px;width:955px;height:1px;background:#edebe0"></div>
<div class="a" style="left:6px;top:182px;width:13px;height:13px;border:1px solid #000;background:#fff"></div>
<svg class="a" style="left:20.5px;top:181.5px" width="15" height="15" viewBox="0 0 15 15"><path d="M0.5 3 L3 0.5 L6.8 4.3 L10.6 0.5 L13.1 3 L9.3 6.8 L13.1 10.6 L10.6 13.1 L6.8 9.3 L3 13.1 L0.5 10.6 L4.3 6.8 Z" transform="translate(0.8 0.8)" fill="#600000" opacity="0.85"/><path d="M0.5 3 L3 0.5 L6.8 4.3 L10.6 0.5 L13.1 3 L9.3 6.8 L13.1 10.6 L10.6 13.1 L6.8 9.3 L3 13.1 L0.5 10.6 L4.3 6.8 Z" fill="#ff0a0a" stroke="#ff0a0a" stroke-width="0.6"/><path d="M2.2 3 L6.8 7.6 M10.6 2.2 L5.2 7.6 M2.4 10.8 L4.6 8.6" fill="none" stroke="#ffc8d8" stroke-width="0.9" opacity="0.85"/></svg>
<div class="cell" style="left:38px;top:182px;width:146px;color:#000;letter-spacing:-0.6px;">SAE.FRP_C</div>
<div class="cell" style="left:191px;top:182px;width:292px;color:#000;">Fuel Rail Pressure</div>
<div class="cell" style="left:491px;top:182px;width:113px;color:#000;">kPa&nbsp; (psi,kPa)</div>
<div class="cell" style="left:610px;top:182px;width:113px;color:#000;">Fuel</div>
<div class="cell" style="left:730.5px;top:182px;width:73px;color:#000;">Generic</div>
<div class="cell" style="left:810.5px;top:182px;width:113px;color:#000;">SAE</div>
<div class="cell" style="left:931px;top:182px;width:23px;color:#000;">1</div>
<div class="a" style="left:0;top:197px;width:955px;height:1px;background:#edebe0"></div>
<div class="a" style="left:6px;top:198px;width:13px;height:13px;border:1px solid #000;background:#fff"></div>
<svg class="a" style="left:20.5px;top:197.5px" width="15" height="15" viewBox="0 0 15 15"><path d="M0.5 3 L3 0.5 L6.8 4.3 L10.6 0.5 L13.1 3 L9.3 6.8 L13.1 10.6 L10.6 13.1 L6.8 9.3 L3 13.1 L0.5 10.6 L4.3 6.8 Z" transform="translate(0.8 0.8)" fill="#600000" opacity="0.85"/><path d="M0.5 3 L3 0.5 L6.8 4.3 L10.6 0.5 L13.1 3 L9.3 6.8 L13.1 10.6 L10.6 13.1 L6.8 9.3 L3 13.1 L0.5 10.6 L4.3 6.8 Z" fill="#ff0a0a" stroke="#ff0a0a" stroke-width="0.6"/><path d="M2.2 3 L6.8 7.6 M10.6 2.2 L5.2 7.6 M2.4 10.8 L4.6 8.6" fill="none" stroke="#ffc8d8" stroke-width="0.9" opacity="0.85"/></svg>
<div class="cell" style="left:38px;top:198px;width:146px;color:#000;letter-spacing:-0.6px;">SAE.FUEL_TYP</div>
<div class="cell" style="left:191px;top:198px;width:292px;color:#000;">Type of fuel currently being utilized by the vehicle</div>
<div class="cell" style="left:491px;top:198px;width:113px;color:#000;"></div>
<div class="cell" style="left:610px;top:198px;width:113px;color:#000;">Fuel</div>
<div class="cell" style="left:730.5px;top:198px;width:73px;color:#000;">Generic</div>
<div class="cell" style="left:810.5px;top:198px;width:113px;color:#000;">SAE</div>
<div class="cell" style="left:931px;top:198px;width:23px;color:#000;">1</div>
<div class="a" style="left:0;top:213px;width:955px;height:1px;background:#edebe0"></div>
<div class="a" style="left:6px;top:214px;width:13px;height:13px;border:1px solid #000;background:#fff"><svg class="a" style="left:0;top:0" width="11" height="11" viewBox="0 0 11 11" shape-rendering="crispEdges"><path d="M8 2h1v1h-1z M7 3h2v1h-2z M2 4h1v1h-1z M6 4h3v1h-3z M2 5h2v1h-2z M5 5h3v1h-3z M2 6h5v1h-5z M3 7h3v1h-3z M4 8h1v1h-1z" fill="#000"/></svg></div>
<svg class="a" style="left:21px;top:215px" width="15" height="12" viewBox="0 0 15 12"><path d="M1.5 6.2 L3.5 4.2 L6 6.7 L11 1.5 L13.6 4.1 L6.8 10.9 L5.6 10.9 Z" fill="#00f000" stroke="#000" stroke-width="0.8" stroke-linejoin="round"/><path d="M6.8 9.8 L12.8 3.8" stroke="#0a7a0a" stroke-width="1.1"/></svg>
<div class="cell" style="left:38px;top:214px;width:146px;color:#000;letter-spacing:-0.6px;">SAE.FUELSYS1</div>
<div class="cell" style="left:191px;top:214px;width:292px;color:#000;">Fuel system 1 status</div>
<div class="cell" style="left:491px;top:214px;width:113px;color:#000;"></div>
<div class="cell" style="left:610px;top:214px;width:113px;color:#000;">Fuel</div>
<div class="cell" style="left:730.5px;top:214px;width:73px;color:#000;">Generic</div>
<div class="cell" style="left:810.5px;top:214px;width:113px;color:#000;">SAE</div>
<div class="cell" style="left:931px;top:214px;width:23px;color:#000;">3</div>
<div class="a" style="left:0;top:229px;width:955px;height:1px;background:#edebe0"></div>
<div class="a" style="left:6px;top:230px;width:13px;height:13px;border:1px solid #000;background:#fff"></div>
<svg class="a" style="left:21px;top:231px" width="15" height="12" viewBox="0 0 15 12"><path d="M1.5 6.2 L3.5 4.2 L6 6.7 L11 1.5 L13.6 4.1 L6.8 10.9 L5.6 10.9 Z" fill="#00f000" stroke="#000" stroke-width="0.8" stroke-linejoin="round"/><path d="M6.8 9.8 L12.8 3.8" stroke="#0a7a0a" stroke-width="1.1"/></svg>
<div class="cell" style="left:38px;top:230px;width:146px;color:#000;letter-spacing:-0.6px;">SAE.FUELSYS2</div>
<div class="cell" style="left:191px;top:230px;width:292px;color:#000;">Fuel system 2 status</div>
<div class="cell" style="left:491px;top:230px;width:113px;color:#000;"></div>
<div class="cell" style="left:610px;top:230px;width:113px;color:#000;">Fuel</div>
<div class="cell" style="left:730.5px;top:230px;width:73px;color:#000;">Generic</div>
<div class="cell" style="left:810.5px;top:230px;width:113px;color:#000;">SAE</div>
<div class="cell" style="left:931px;top:230px;width:23px;color:#000;">3</div>
<div class="a" style="left:0;top:245px;width:955px;height:1px;background:#edebe0"></div>
<div class="a" style="left:6px;top:246px;width:13px;height:13px;border:1px solid #000;background:#fff"><svg class="a" style="left:0;top:0" width="11" height="11" viewBox="0 0 11 11" shape-rendering="crispEdges"><path d="M8 2h1v1h-1z M7 3h2v1h-2z M2 4h1v1h-1z M6 4h3v1h-3z M2 5h2v1h-2z M5 5h3v1h-3z M2 6h5v1h-5z M3 7h3v1h-3z M4 8h1v1h-1z" fill="#000"/></svg></div>
<svg class="a" style="left:21px;top:247px" width="15" height="12" viewBox="0 0 15 12"><path d="M1.5 6.2 L3.5 4.2 L6 6.7 L11 1.5 L13.6 4.1 L6.8 10.9 L5.6 10.9 Z" fill="#00f000" stroke="#000" stroke-width="0.8" stroke-linejoin="round"/><path d="M6.8 9.8 L12.8 3.8" stroke="#0a7a0a" stroke-width="1.1"/></svg>
<div class="cell" style="left:38px;top:246px;width:146px;color:#000;letter-spacing:-0.6px;">SAE.LONGFT1</div>
<div class="cell" style="left:191px;top:246px;width:292px;color:#000;">Long Term Fuel Trim - Bank 1</div>
<div class="cell" style="left:491px;top:246px;width:113px;color:#000;">%</div>
<div class="cell" style="left:610px;top:246px;width:113px;color:#000;">Fuel</div>
<div class="cell" style="left:730.5px;top:246px;width:73px;color:#000;">Generic</div>
<div class="cell" style="left:810.5px;top:246px;width:113px;color:#000;">SAE</div>
<div class="cell" style="left:931px;top:246px;width:23px;color:#000;">1</div>
<div class="a" style="left:0;top:261px;width:955px;height:1px;background:#edebe0"></div>
<div class="a" style="left:6px;top:262px;width:13px;height:13px;border:1px solid #000;background:#fff"><svg class="a" style="left:0;top:0" width="11" height="11" viewBox="0 0 11 11" shape-rendering="crispEdges"><path d="M8 2h1v1h-1z M7 3h2v1h-2z M2 4h1v1h-1z M6 4h3v1h-3z M2 5h2v1h-2z M5 5h3v1h-3z M2 6h5v1h-5z M3 7h3v1h-3z M4 8h1v1h-1z" fill="#000"/></svg></div>
<svg class="a" style="left:21px;top:263px" width="15" height="12" viewBox="0 0 15 12"><path d="M1.5 6.2 L3.5 4.2 L6 6.7 L11 1.5 L13.6 4.1 L6.8 10.9 L5.6 10.9 Z" fill="#00f000" stroke="#000" stroke-width="0.8" stroke-linejoin="round"/><path d="M6.8 9.8 L12.8 3.8" stroke="#0a7a0a" stroke-width="1.1"/></svg>
<div class="cell" style="left:38px;top:262px;width:146px;color:#000;letter-spacing:-0.6px;">SAE.LONGFT2</div>
<div class="cell" style="left:191px;top:262px;width:292px;color:#000;">Long Term Fuel Trim - Bank 2</div>
<div class="cell" style="left:491px;top:262px;width:113px;color:#000;">%</div>
<div class="cell" style="left:610px;top:262px;width:113px;color:#000;">Fuel</div>
<div class="cell" style="left:730.5px;top:262px;width:73px;color:#000;">Generic</div>
<div class="cell" style="left:810.5px;top:262px;width:113px;color:#000;">SAE</div>
<div class="cell" style="left:931px;top:262px;width:23px;color:#000;">1</div>
<div class="a" style="left:0;top:277px;width:955px;height:1px;background:#edebe0"></div>
<div class="a" style="left:6px;top:278px;width:13px;height:13px;border:1px solid #000;background:#fff"></div>
<svg class="a" style="left:21px;top:279px" width="15" height="12" viewBox="0 0 15 12"><path d="M1.5 6.2 L3.5 4.2 L6 6.7 L11 1.5 L13.6 4.1 L6.8 10.9 L5.6 10.9 Z" fill="#00f000" stroke="#000" stroke-width="0.8" stroke-linejoin="round"/><path d="M6.8 9.8 L12.8 3.8" stroke="#0a7a0a" stroke-width="1.1"/></svg>
<div class="cell" style="left:38px;top:278px;width:146px;color:#000;letter-spacing:-0.6px;">SAE.LONGFT3</div>
<div class="cell" style="left:191px;top:278px;width:292px;color:#000;">Long Term Fuel Trim - Bank 3</div>
<div class="cell" style="left:491px;top:278px;width:113px;color:#000;">%</div>
<div class="cell" style="left:610px;top:278px;width:113px;color:#000;">Fuel</div>
<div class="cell" style="left:730.5px;top:278px;width:73px;color:#000;">Generic</div>
<div class="cell" style="left:810.5px;top:278px;width:113px;color:#000;">SAE</div>
<div class="cell" style="left:931px;top:278px;width:23px;color:#000;">1</div>
<div class="a" style="left:0;top:293px;width:955px;height:1px;background:#edebe0"></div>
<div class="a" style="left:6px;top:294px;width:13px;height:13px;border:1px solid #000;background:#fff"></div>
<svg class="a" style="left:21px;top:295px" width="15" height="12" viewBox="0 0 15 12"><path d="M1.5 6.2 L3.5 4.2 L6 6.7 L11 1.5 L13.6 4.1 L6.8 10.9 L5.6 10.9 Z" fill="#00f000" stroke="#000" stroke-width="0.8" stroke-linejoin="round"/><path d="M6.8 9.8 L12.8 3.8" stroke="#0a7a0a" stroke-width="1.1"/></svg>
<div class="cell" style="left:38px;top:294px;width:146px;color:#000;letter-spacing:-0.6px;">SAE.LONGFT4</div>
<div class="cell" style="left:191px;top:294px;width:292px;color:#000;">Long Term Fuel Trim - Bank 4</div>
<div class="cell" style="left:491px;top:294px;width:113px;color:#000;">%</div>
<div class="cell" style="left:610px;top:294px;width:113px;color:#000;">Fuel</div>
<div class="cell" style="left:730.5px;top:294px;width:73px;color:#000;">Generic</div>
<div class="cell" style="left:810.5px;top:294px;width:113px;color:#000;">SAE</div>
<div class="cell" style="left:931px;top:294px;width:23px;color:#000;">1</div>
<div class="a" style="left:0;top:309px;width:955px;height:1px;background:#edebe0"></div>
<div class="a" style="left:6px;top:310px;width:13px;height:13px;border:1px solid #000;background:#fff"><svg class="a" style="left:0;top:0" width="11" height="11" viewBox="0 0 11 11" shape-rendering="crispEdges"><path d="M8 2h1v1h-1z M7 3h2v1h-2z M2 4h1v1h-1z M6 4h3v1h-3z M2 5h2v1h-2z M5 5h3v1h-3z M2 6h5v1h-5z M3 7h3v1h-3z M4 8h1v1h-1z" fill="#000"/></svg></div>
<svg class="a" style="left:21px;top:311px" width="15" height="12" viewBox="0 0 15 12"><path d="M1.5 6.2 L3.5 4.2 L6 6.7 L11 1.5 L13.6 4.1 L6.8 10.9 L5.6 10.9 Z" fill="#00f000" stroke="#000" stroke-width="0.8" stroke-linejoin="round"/><path d="M6.8 9.8 L12.8 3.8" stroke="#0a7a0a" stroke-width="1.1"/></svg>
<div class="cell" style="left:38px;top:310px;width:146px;color:#000;letter-spacing:-0.6px;">SAE.SHRTFT1</div>
<div class="cell" style="left:191px;top:310px;width:292px;color:#000;">Short Term Fuel Trim - Bank 1</div>
<div class="cell" style="left:491px;top:310px;width:113px;color:#000;">%</div>
<div class="cell" style="left:610px;top:310px;width:113px;color:#000;">Fuel</div>
<div class="cell" style="left:730.5px;top:310px;width:73px;color:#000;">Generic</div>
<div class="cell" style="left:810.5px;top:310px;width:113px;color:#000;">SAE</div>
<div class="cell" style="left:931px;top:310px;width:23px;color:#000;">1</div>
<div class="a" style="left:0;top:325px;width:955px;height:1px;background:#edebe0"></div>
<div class="a" style="left:6px;top:326px;width:13px;height:13px;border:1px solid #000;background:#fff"></div>
<svg class="a" style="left:21px;top:327px" width="15" height="12" viewBox="0 0 15 12"><path d="M1.5 6.2 L3.5 4.2 L6 6.7 L11 1.5 L13.6 4.1 L6.8 10.9 L5.6 10.9 Z" fill="#00f000" stroke="#000" stroke-width="0.8" stroke-linejoin="round"/><path d="M6.8 9.8 L12.8 3.8" stroke="#0a7a0a" stroke-width="1.1"/></svg>
<div class="cell" style="left:38px;top:326px;width:146px;color:#000;letter-spacing:-0.6px;">SAE.SHRTFT2</div>
<div class="cell" style="left:191px;top:326px;width:292px;color:#000;">Short Term Fuel Trim - Bank 2</div>
<div class="cell" style="left:491px;top:326px;width:113px;color:#000;">%</div>
<div class="cell" style="left:610px;top:326px;width:113px;color:#000;">Fuel</div>
<div class="cell" style="left:730.5px;top:326px;width:73px;color:#000;">Generic</div>
<div class="cell" style="left:810.5px;top:326px;width:113px;color:#000;">SAE</div>
<div class="cell" style="left:931px;top:326px;width:23px;color:#000;">1</div>
<div class="a" style="left:0;top:341px;width:955px;height:1px;background:#edebe0"></div>
<div class="a" style="left:6px;top:342px;width:13px;height:13px;border:1px solid #000;background:#fff"></div>
<svg class="a" style="left:21px;top:343px" width="15" height="12" viewBox="0 0 15 12"><path d="M1.5 6.2 L3.5 4.2 L6 6.7 L11 1.5 L13.6 4.1 L6.8 10.9 L5.6 10.9 Z" fill="#00f000" stroke="#000" stroke-width="0.8" stroke-linejoin="round"/><path d="M6.8 9.8 L12.8 3.8" stroke="#0a7a0a" stroke-width="1.1"/></svg>
<div class="cell" style="left:38px;top:342px;width:146px;color:#000;letter-spacing:-0.6px;">SAE.SHRTFT3</div>
<div class="cell" style="left:191px;top:342px;width:292px;color:#000;">Short Term Fuel Trim - Bank 3</div>
<div class="cell" style="left:491px;top:342px;width:113px;color:#000;">%</div>
<div class="cell" style="left:610px;top:342px;width:113px;color:#000;">Fuel</div>
<div class="cell" style="left:730.5px;top:342px;width:73px;color:#000;">Generic</div>
<div class="cell" style="left:810.5px;top:342px;width:113px;color:#000;">SAE</div>
<div class="cell" style="left:931px;top:342px;width:23px;color:#000;">1</div>
<div class="a" style="left:185px;top:21px;width:1px;height:326px;background:#edebe0"></div>
<div class="a" style="left:485px;top:21px;width:1px;height:326px;background:#edebe0"></div>
<div class="a" style="left:605px;top:21px;width:1px;height:326px;background:#edebe0"></div>
<div class="a" style="left:725px;top:21px;width:1px;height:326px;background:#edebe0"></div>
<div class="a" style="left:805px;top:21px;width:1px;height:326px;background:#edebe0"></div>
<div class="a" style="left:925px;top:21px;width:1px;height:326px;background:#edebe0"></div>
<div class="a" style="left:955px;top:0;width:17px;height:347px;background:linear-gradient(to right,#f3f1ec,#fefefb 60%,#f3f1ec)"></div>
<div class="a" style="left:957px;top:2px;width:14px;height:14px;border:1px solid #bccdf4;border-radius:2px;background:linear-gradient(135deg,#e2eafe 0,#c9d8fc 60%,#b6cafa 100%);box-shadow:0 1px 0 #a0b6e8"><svg class="a" style="left:2px;top:3px" width="9" height="6" viewBox="0 0 9 6"><path d="M1 5 L4.5 1.5 L8 5" fill="none" stroke="#4d6185" stroke-width="2"/></svg></div>
<div class="a" style="left:957px;top:330px;width:14px;height:15px;border:1px solid #bccdf4;border-radius:2px;background:linear-gradient(135deg,#e2eafe 0,#c9d8fc 60%,#b6cafa 100%);box-shadow:0 1px 0 #a0b6e8"><svg class="a" style="left:2px;top:4px" width="9" height="6" viewBox="0 0 9 6"><path d="M1 1 L4.5 4.5 L8 1" fill="none" stroke="#4d6185" stroke-width="2"/></svg></div>
<div class="a" style="left:957px;top:271px;width:14px;height:47px;border:1px solid #bccdf4;border-radius:2px;background:linear-gradient(135deg,#e2eafe 0,#c9d8fc 60%,#b6cafa 100%);box-shadow:0 1px 0 #a0b6e8"><div class="a" style="left:3px;top:18px;width:6px;height:7px;background:repeating-linear-gradient(to bottom,#eef3fe 0,#eef3fe 1px,#8aa4dc 1px,#8aa4dc 2px)"></div></div>
<div class="a" style="left:0;top:347px;width:955px;height:16px;background:linear-gradient(to bottom,#f3f1ec,#fefefb 60%,#f3f1ec)"></div>
<div class="a" style="left:1px;top:348px;width:15px;height:14px;border:1px solid #bccdf4;border-radius:2px;background:linear-gradient(135deg,#e2eafe 0,#c9d8fc 60%,#b6cafa 100%);box-shadow:0 1px 0 #a0b6e8"><svg class="a" style="left:4px;top:2px" width="6" height="9" viewBox="0 0 6 9"><path d="M5 1 L1.5 4.5 L5 8" fill="none" stroke="#4d6185" stroke-width="2"/></svg></div>
<div class="a" style="left:938px;top:348px;width:15px;height:14px;border:1px solid #bccdf4;border-radius:2px;background:linear-gradient(135deg,#e2eafe 0,#c9d8fc 60%,#b6cafa 100%);box-shadow:0 1px 0 #a0b6e8"><svg class="a" style="left:4px;top:2px" width="6" height="9" viewBox="0 0 6 9"><path d="M1 1 L4.5 4.5 L1 8" fill="none" stroke="#4d6185" stroke-width="2"/></svg></div>
<div class="a" style="left:18px;top:348px;width:899px;height:14px;border:1px solid #bccdf4;border-radius:2px;background:linear-gradient(135deg,#e2eafe 0,#c9d8fc 60%,#b6cafa 100%);box-shadow:0 1px 0 #a0b6e8;background:linear-gradient(to bottom,#cad9fd 0,#bed0fb 60%,#b4c8f8 100%)"><div class="a" style="left:445px;top:3px;width:7px;height:6px;background:repeating-linear-gradient(to right,#eef3fe 0,#eef3fe 1px,#8aa4dc 1px,#8aa4dc 2px)"></div></div>
<div class="a" style="left:955px;top:347px;width:17px;height:16px;background:#ece9d8"></div>
</div>
<div class="a" style="left:0;top:575px;width:997px;height:23px;background:linear-gradient(to bottom,#8a877a 0,#8a877a 1px,#b5b2a3 1px,#b5b2a3 2px,#d6d3c5 2px,#d6d3c5 3px,#e8e5d6 4px,#ebe8d8 12px,#e4e1d1 22px,#e0ddcd 23px)"></div>
<div class="a" style="left:0;top:598px;width:997px;height:1px;background:#a9a596"></div>
<div class="a" style="left:0;top:599px;width:997px;height:4px;background:#efede0"></div>
<div class="t" style="left:3px;top:580px">Visible PIDs: 128</div>
<div class="t" style="left:254px;top:580px">Total PIDs: 1699</div>
<div class="t" style="left:503px;top:580px">Total Supported PIDs: 716</div>
<div class="t" style="left:752px;top:580px">Total Selected PIDs: 12</div>
<div class="a" style="left:248px;top:579px;width:1px;height:16px;background:#c5c2b2;box-shadow:1px 0 0 #fff"></div>
<div class="a" style="left:497px;top:579px;width:1px;height:16px;background:#c5c2b2;box-shadow:1px 0 0 #fff"></div>
<div class="a" style="left:746px;top:579px;width:1px;height:16px;background:#c5c2b2;box-shadow:1px 0 0 #fff"></div>
<div class="a" style="left:0;top:603px;width:997px;height:1px;background:#adaa9b"></div>
<div class="a" style="left:0;top:604px;width:997px;height:18px;background:linear-gradient(to bottom,#c9c6b6 0,#d3d0c0 5px,#dcd9c9 11px,#e2dfcf 17px,#e3e0d0 18px)"></div>
<div class="t" style="left:3px;top:604px">Data Control Panel</div>
<svg class="a" style="left:981px;top:607px" width="11" height="10" viewBox="0 0 11 10"><path d="M1.5 1.5 L9.5 8.5 M9.5 1.5 L1.5 8.5" stroke="#000" stroke-width="1.8"/></svg>
<div class="a" style="left:2px;top:622px;width:994px;height:84px;border-top:1px solid #7a776b;border-left:1px solid #7a776b;border-right:1px solid #fff;border-bottom:1px solid #fff;background:#ece9d8"><div class="a" style="left:0;top:0;right:0;bottom:0;border-top:1px solid #f8f6ee;border-left:1px solid #f8f6ee"></div></div>
<div class="a" style="left:38px;top:633px;width:921px;height:8px;border:1px solid #000;background:#fff"></div>
<div class="a" style="left:38px;top:651px;width:921px;height:1px;background:#a0a09a"></div>
<div class="a" style="left:38px;top:652px;width:922px;height:2px;background:#f6f4ec"></div>
<svg class="a" style="left:37px;top:643px" width="11" height="21" viewBox="0 0 11 21"><defs><linearGradient id="gth" x1="0" y1="0" x2="1" y2="0"><stop offset="0" stop-color="#fbfbf9"/><stop offset="0.7" stop-color="#f0efea"/><stop offset="1" stop-color="#d8d6cc"/></linearGradient><linearGradient id="gtg" x1="0" y1="0" x2="1" y2="1"><stop offset="0" stop-color="#60d860"/><stop offset="1" stop-color="#10a810"/></linearGradient></defs><path d="M0.5 1.5 Q0.5 0.5 1.5 0.5 H9.5 Q10.5 0.5 10.5 1.5 V14.5 L5.5 20.3 L0.5 14.5 Z" fill="url(#gth)" stroke="#a8b4c0" stroke-width="1"/><path d="M1 1.2 Q1 1 2 1 H9 Q10 1 10 2 V4 H1 Z" fill="url(#gtg)"/><path d="M1.2 14.2 L5.5 19 L9.8 14.2" fill="none" stroke="#20b020" stroke-width="1.6"/></svg>
<div class="t" style="left:13px;top:641px">0</div>
<div class="t" style="left:977px;top:641px">0</div>
<div class="t" style="left:13px;top:679px">Frame:</div>
<div class="t" style="left:56px;top:679px">0</div>
<div class="t" style="left:882px;top:679px">Time:</div>
<div class="t" style="left:918px;top:679px;letter-spacing:0.15px">00:00:00.000</div>
<svg class="a" style="left:273px;top:679px" width="15" height="14" viewBox="0 0 15 14"><defs><linearGradient id="gp" x1="0" y1="0" x2="1" y2="0"><stop offset="0" stop-color="#a2a29a"/><stop offset="0.5" stop-color="#cacac2"/><stop offset="1" stop-color="#9c9c94"/></linearGradient><radialGradient id="gs" cx="0.5" cy="0.5" r="0.6"><stop offset="0" stop-color="#b8b8ad"/><stop offset="1" stop-color="#7c7c70"/></radialGradient><radialGradient id="gl" cx="0.4" cy="0.35" r="0.6"><stop offset="0" stop-color="#f0f0e8"/><stop offset="1" stop-color="#a8a89c"/></radialGradient><radialGradient id="gd" cx="0.4" cy="0.35" r="0.6"><stop offset="0" stop-color="#b0b0a5"/><stop offset="1" stop-color="#6a6a60"/></radialGradient></defs><rect x="0.5" y="0.5" width="4.2" height="13" rx="2" fill="url(#gp)" stroke="#a0a098" stroke-width="0.9"/><path d="M13.5 1 V13 L6.8 7 Z" fill="url(#gp)" stroke="#a0a098" stroke-width="1.4" stroke-linejoin="round"/></svg>
<svg class="a" style="left:296px;top:679px" width="15" height="14" viewBox="0 0 15 14"><path d="M6.5 1 V13 L0.8 7 Z" fill="url(#gp)" stroke="#a0a098" stroke-width="1.4" stroke-linejoin="round"/><path d="M12.5 1 V13 L6.8 7 Z" fill="url(#gp)" stroke="#a0a098" stroke-width="1.4" stroke-linejoin="round"/></svg>
<svg class="a" style="left:319px;top:679px" width="15" height="14" viewBox="0 0 15 14"><path d="M6.5 1 V13 L0.8 7 Z" fill="url(#gp)" stroke="#a0a098" stroke-width="1.4" stroke-linejoin="round"/><rect x="9.5" y="0.5" width="4.2" height="13" rx="2" fill="url(#gp)" stroke="#a0a098" stroke-width="0.9"/></svg>
<svg class="a" style="left:389px;top:679px" width="15" height="14" viewBox="0 0 15 14"><rect x="0.5" y="0.5" width="4.2" height="13" rx="2" fill="url(#gp)" stroke="#a0a098" stroke-width="0.9"/><rect x="7.5" y="0.5" width="4.2" height="13" rx="2" fill="url(#gp)" stroke="#a0a098" stroke-width="0.9"/></svg>
<svg class="a" style="left:412px;top:679px" width="15" height="14" viewBox="0 0 15 14"><path d="M0.5 1 V13 L11.2 7 Z" fill="url(#gp)" stroke="#a0a098" stroke-width="1.4" stroke-linejoin="round"/></svg>
<svg class="a" style="left:457px;top:679px" width="15" height="14" viewBox="0 0 15 14"><rect x="0.5" y="0.5" width="4.2" height="13" rx="2" fill="url(#gp)" stroke="#a0a098" stroke-width="0.9"/><path d="M6.5 1 V13 L13.2 7 Z" fill="url(#gp)" stroke="#a0a098" stroke-width="1.4" stroke-linejoin="round"/></svg>
<svg class="a" style="left:480px;top:679px" width="15" height="14" viewBox="0 0 15 14"><path d="M0.5 1 V13 L6.2 7 Z" fill="url(#gp)" stroke="#a0a098" stroke-width="1.4" stroke-linejoin="round"/><path d="M6.5 1 V13 L12.2 7 Z" fill="url(#gp)" stroke="#a0a098" stroke-width="1.4" stroke-linejoin="round"/></svg>
<svg class="a" style="left:503px;top:679px" width="15" height="14" viewBox="0 0 15 14"><path d="M0.5 1 V13 L7.2 7 Z" fill="url(#gp)" stroke="#a0a098" stroke-width="1.4" stroke-linejoin="round"/><rect x="9.5" y="0.5" width="4.2" height="13" rx="2" fill="url(#gp)" stroke="#a0a098" stroke-width="0.9"/></svg>
<svg class="a" style="left:343px;top:680px" width="12" height="12" viewBox="0 0 12 12"><circle cx="6" cy="6" r="5.2" fill="url(#gl)" stroke="#9a9a8e" stroke-width="0.8"/></svg>
<svg class="a" style="left:366px;top:680px" width="12" height="12" viewBox="0 0 12 12"><circle cx="6" cy="6" r="5.2" fill="url(#gd)" stroke="#6a6a60" stroke-width="0.8"/></svg>
<svg class="a" style="left:434px;top:679px" width="14" height="14" viewBox="0 0 14 14"><rect x="0.5" y="0.5" width="13" height="13" rx="1.5" fill="url(#gs)" stroke="#6e6e64" stroke-width="1"/></svg>
<div class="a" style="left:526px;top:678px;width:1px;height:18px;background:#c5c2b2;box-shadow:1px 0 0 #fff"></div>
<div class="a" style="left:602px;top:678px;width:1px;height:18px;background:#c5c2b2;box-shadow:1px 0 0 #fff"></div>
<svg class="a" style="left:534px;top:679px" width="14" height="14" viewBox="0 0 14 14"><defs><linearGradient id="gnd" x1="0" y1="0" x2="1" y2="1"><stop offset="0" stop-color="#fff"/><stop offset="1" stop-color="#b8f0b0"/></linearGradient></defs><path d="M1 0.8 H8.5 L12.5 4.8 V13.2 H1 Z" fill="url(#gnd)" stroke="#1a9a1a" stroke-width="1.2"/></svg>
<svg class="a" style="left:556px;top:679px" width="16" height="14" viewBox="0 0 16 14"><path d="M2 3 L6 1.5 L7.5 2.5 L14.5 1 L15 9.5 L5 13 Z" fill="#8ee070" stroke="#2a9a2a" stroke-width="0.8"/><path d="M0.5 6 L10.5 4 L14.5 10 L5 13.5 Z" fill="#48c040" stroke="#1a8a1a" stroke-width="0.8"/></svg>
<svg class="a" style="left:580px;top:679px" width="14" height="14" viewBox="0 0 14 14"><rect x="0.5" y="0.5" width="13" height="13" rx="1.5" fill="#a8a8a0" stroke="#909088"/><rect x="3" y="1" width="8" height="5.5" fill="#e8e8e4"/><path d="M4 2.5 H10 M4 4 H10" stroke="#b0b0a8" stroke-width="0.7"/><rect x="3.5" y="9" width="7" height="4.5" fill="#e8e8e4"/><rect x="4.5" y="10" width="2" height="3" fill="#909088"/></svg>
<svg class="a" style="left:609px;top:676px" width="20" height="20" viewBox="613 706 20 20"><path d="M616.2 709.4 L618 709.2 L626.3 715.5 L626 719 L617 722 L616.3 721.8 Z" fill="#dcdcd4" stroke="#bdbdb5" stroke-width="0.8" stroke-linejoin="round"/>
<path d="M618 709.4 L626 715.6" stroke="#f4f4f0" stroke-width="1"/>
<path d="M622 719.4 H629 M625.5 715.9 V722.9" stroke="#a4a49c" stroke-width="3.2"/>
<path d="M622.8 719.4 H628.2 M625.5 716.7 V722.1" stroke="#f0f0ec" stroke-width="1.2"/></svg>
<svg class="a" style="left:633px;top:677px" width="16" height="18" viewBox="637 707 16 18"><path d="M639.3 718.5 L645.5 715.5 L651 718 L651 720 L644.5 722.8 L639.3 720.5 Z" fill="#a8a8a8" stroke="#808080" stroke-width="0.5"/>
<path d="M639.3 718.5 L645.5 715.5 L651 718 L644.5 720.8 Z" fill="#f4f4f4" stroke="#909090" stroke-width="0.5"/>
<path d="M645 722.5 L650.8 719.8" stroke="#606060" stroke-width="1"/>
<path d="M645.5 709 L649.5 713.2 L647.3 713.5 L647.8 717.5 L643.5 718.5 L643.2 714.2 L641 714.5 Z" fill="#40d030" stroke="#20a020" stroke-width="0.7" stroke-linejoin="round"/></svg>
<svg class="a" style="left:656px;top:678px" width="17" height="17" viewBox="660 708 17 17"><rect x="661.5" y="709.5" width="13" height="13" fill="#e4e4fa" stroke="#6a6a78" stroke-width="1"/>
<path d="M662 713.8 H674 M662 718.2 H674 M665.8 710 V722 M670.2 710 V722" stroke="#fff" stroke-width="0.9"/>
<circle cx="668.2" cy="716.2" r="3.1" fill="#88ccf4" stroke="#4a7aa8" stroke-width="0.8"/>
<circle cx="667.4" cy="715.3" r="1.1" fill="#d8f0ff"/>
<path d="M672.5 718.5 L673.4 720.3 L675.2 720.5 L673.6 721.5 L673.2 723.3 L672.2 721.8 L670.5 721.8 L671.6 720.5 Z" fill="#ff8a20"/></svg>
<div class="a" style="left:0;top:705px;width:997px;height:1px;background:#fff"></div>
<div class="a" style="left:0;top:706px;width:997px;height:24px;background:linear-gradient(to bottom,#8f8c80 0,#8f8c80 1px,#a8a596 1px,#a8a596 2px,#c8c5b6 2px,#c8c5b6 3px,#dedbcc 3px,#dedbcc 4px,#eae7d7 4px,#eae7d7 21px,#e0dccc 22px,#f2ead2 23px,#f2ead2 24px)"></div>
<div class="a" style="left:0;top:710px;width:70px;height:19px;background:linear-gradient(to right,rgba(248,247,242,0.9),rgba(248,247,242,0))"></div>
<div class="a" style="left:324px;top:710px;width:272px;height:18px;background:#fdfdfb"></div>
<div class="a" style="left:323px;top:710px;width:1px;height:18px;background:#c5c2b2;box-shadow:1px 0 0 #fff"></div>
<div class="a" style="left:596px;top:710px;width:1px;height:18px;background:#c5c2b2;box-shadow:1px 0 0 #fff"></div>
<div class="a" style="left:797px;top:710px;width:1px;height:18px;background:#c5c2b2;box-shadow:1px 0 0 #fff"></div>
<div class="a" style="left:327px;top:715px;width:15px;height:7px;background:#f00;border:1px solid #000"></div>
<div class="a" style="left:406px;top:715px;width:15px;height:7px;background:#f00;border:1px solid #000"></div>
<div class="t" style="left:346px;top:712px;font-weight:bold;letter-spacing:0.4px">Scan Tool</div>
<div class="t" style="left:426px;top:712px;font-weight:bold;letter-spacing:0.4px">Vehicle</div>
<div class="t" style="left:602px;top:712px">John Doe - 2006 Ford Taurus 3.0L</div>
<div class="t" style="left:804px;top:712px;letter-spacing:-0.12px">Registered To: Palmer Performance</div>
<div class="a" style="left:993px;top:718px;width:2px;height:2px;background:#b8b5a6;box-shadow:1px 1px 0 #fff"></div>
<div class="a" style="left:993px;top:722px;width:2px;height:2px;background:#b8b5a6;box-shadow:1px 1px 0 #fff"></div>
<div class="a" style="left:989px;top:722px;width:2px;height:2px;background:#b8b5a6;box-shadow:1px 1px 0 #fff"></div>
<div class="a" style="left:993px;top:726px;width:2px;height:2px;background:#b8b5a6;box-shadow:1px 1px 0 #fff"></div>
<div class="a" style="left:989px;top:726px;width:2px;height:2px;background:#b8b5a6;box-shadow:1px 1px 0 #fff"></div>
<div class="a" style="left:985px;top:726px;width:2px;height:2px;background:#b8b5a6;box-shadow:1px 1px 0 #fff"></div>
<div class="a" style="left:0;top:53px;width:1px;height:677px;background:#d6cfb6"></div>
<div class="a" style="left:996px;top:53px;width:1px;height:677px;background:#d0c8ae"></div>
<div class="a" style="left:996px;top:0;width:1px;height:53px;background:#fbf4dc"></div>
<div class="a" style="left:0;top:0;width:997px;height:1px;background:#f8f2dc"></div>
</div>
<div id="bottomb"></div>
</div>
</body></html>
